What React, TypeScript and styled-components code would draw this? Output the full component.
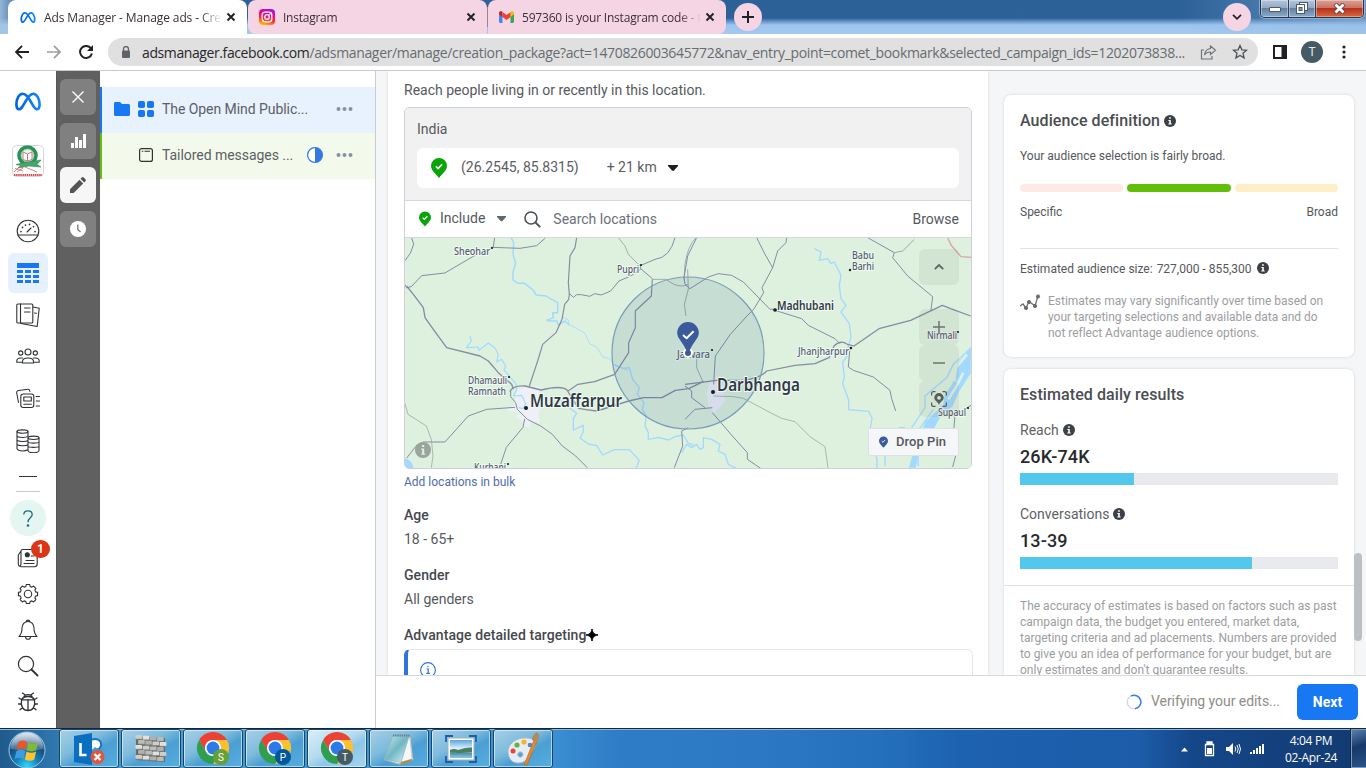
import React from 'react';
import styled, { createGlobalStyle } from 'styled-components';

const Global = createGlobalStyle`
  * { box-sizing: border-box; }
  body { margin: 0; font-family: Roboto, "Liberation Sans", sans-serif; font-size: 14px; color: #54565a; overflow: hidden; }
  svg { display: block; flex: none; }
`;

const Screen = styled.div`
  width: 1366px; height: 768px; display: flex; flex-direction: column; overflow: hidden; background: #fff;
`;

/* ---------- browser ---------- */
const TabStrip = styled.div`
  height: 34px; flex: none; display: flex; align-items: flex-start; padding-left: 8px;
  font-family: "Open Sans", "Noto Sans", sans-serif; font-size: 12px; color: #3a3034;
  background:
    linear-gradient(90deg, rgba(165,196,224,.85) 0, rgba(165,196,224,.4) 12px, transparent 30px, transparent 1180px, rgba(150,190,225,.55) 1366px),
    linear-gradient(180deg, #2c6198 0, #2d6097 18px, #5d8fc4 21px, #9dc4ee 25px, #a3c9f0 34px);
`;
const Tab = styled.div<{ $active?: boolean; $w: number; $first?: boolean; $last?: boolean }>`
  width: ${p => p.$w}px; height: 34px; display: flex; align-items: center;
  padding: 0 11px 0 ${p => (p.$active ? 12 : 11)}px;
  background: ${p => (p.$active ? '#fff' : '#f5d5e4')};
  border-radius: ${p => (p.$active ? '8px 8px 0 0' : p.$first ? '8px 8px 0 8px' : '8px 8px 8px 0')};
`;
const TabTitle = styled.span<{ $space: number }>`
  flex: 1; margin: 0 4px 0 8px; overflow: hidden; white-space: nowrap; letter-spacing: ${p => p.$space}px;
  mask-image: linear-gradient(90deg, #000 calc(100% - 22px), transparent);
`;
const TabDivider = styled.i`width: 1px; height: 20px; margin-top: 7px; background: #9a8790;`;
const RoundButton = styled.div`
  width: 28px; height: 28px; border-radius: 50%; background: #f5d5e4; display: grid; place-items: center; margin-top: 3px;
`;
const Grow = styled.div`flex: 1;`;
const WindowControls = styled.div`
  display: flex; width: 104px; height: 18px; margin: 0 2px 0 9px; overflow: hidden;
  border: 1px solid #24364d; border-top: 0; border-radius: 0 0 5px 5px; box-shadow: 0 0 1px 1px #c4daef88;
`;
const WindowButton = styled.div<{ $w: number; $close?: boolean }>`
  width: ${p => p.$w}px; display: grid; place-items: center; padding-bottom: 1px; border-right: 1px solid #2c4059;
  box-shadow: inset 0 0 0 1px rgba(255,255,255,.35);
  background: ${p => p.$close
    ? 'linear-gradient(#dca095, #c87464 45%, #b8311c 50%, #d8673f)'
    : 'linear-gradient(#b4c6da, #93a9c4 45%, #66809f 50%, #8eabca)'};
  &:last-child { border-right: 0; }
`;
const Toolbar = styled.div`
  height: 37px; flex: none; display: flex; align-items: center; padding: 0 12px; background: #fff; border-bottom: 1px solid #c8c9cb;
`;
const NavIcon = styled.div`width: 20px; height: 20px; margin-right: 12px; display: grid; place-items: center;`;
const Omnibox = styled.div`
  width: 1150px; height: 28px; border-radius: 14px; background: #e0e0e0; display: flex; align-items: center; gap: 0;
  padding: 0 10px 0 12px; font-family: "Open Sans", "Noto Sans", sans-serif; font-size: 14px; color: #686c70;
`;
const Url = styled.span`
  margin-left: 10px; width: 1043px; white-space: nowrap; letter-spacing: -0.345px; margin-right: 15px;
  b { font-weight: 400; color: #26282b; letter-spacing: -0.4px; }
`;
const ProfileDot = styled.div`
  width: 22px; height: 22px; border-radius: 50%; background: #455a64; color: #e6eaec; font-size: 12px; display: grid; place-items: center;
`;

/* ---------- application ---------- */
const Body = styled.div`height: 657px; flex: none; display: flex;`;
const Sidebar = styled.nav`
  width: 56px; display: flex; flex-direction: column; align-items: center; padding-top: 12px; background: #fff;
`;
const SideSlot = styled.div<{ $h: number; $mt?: number }>`
  height: ${p => p.$h}px; width: 56px; margin-top: ${p => p.$mt || 0}px; flex: none; display: grid; place-items: center;
  position: relative; color: #2f3235;
`;
const ActiveTile = styled.div`
  width: 40px; height: 40px; border-radius: 6px; background: #e7f1fd; display: grid; place-items: center;
`;
const SideLine = styled.i<{ $w: number; $mt: number; $color: string }>`
  width: ${p => p.$w}px; height: 1px; margin-top: ${p => p.$mt}px; background: ${p => p.$color}; flex: none;
`;
const HelpCircle = styled.div`
  width: 36px; height: 36px; border-radius: 50%; background: #e5f5f1; display: grid; place-items: center;
`;
const Badge = styled.span`
  position: absolute; left: 31px; top: 0; width: 19px; height: 18px; border-radius: 9px; background: #dc3516; color: #fff;
  font-size: 12px; font-weight: 700; line-height: 18px; text-align: center;
`;
const Rail = styled.div`
  width: 44px; background: #606060; border-left: 1px solid #555; padding: 8px 4px 0 3px; display: flex; flex-direction: column; gap: 8px;
`;
const RailButton = styled.div<{ $on?: boolean }>`
  width: 36px; height: 36px; border-radius: 6px; display: grid; place-items: center; background: ${p => (p.$on ? '#f6f6f6' : '#808080')};
`;
const Tree = styled.div`
  width: 276px; padding-top: 16px; background: #fff; border-right: 1px solid #c9ccd1;
`;
const TreeRow = styled.div<{ $accent: string; $bg: string; $pl: number }>`
  height: 46px; display: flex; align-items: center; background: ${p => p.$bg}; border-left: 2px solid ${p => p.$accent};
  padding: 0 21px 2px ${p => p.$pl}px;
`;
const TreeName = styled.span<{ $w: number; $s: number }>`
  margin-left: 8px; width: ${p => p.$w}px; white-space: nowrap; letter-spacing: ${p => p.$s}px; color: #5c6066;
`;
const Workspace = styled.div`width: 990px; display: flex; flex-direction: column; background: #f5f6f7;`;
const Scroll = styled.div`height: 604px; display: flex; overflow: hidden; padding-left: 12px;`;
const Editor = styled.div`
  width: 600px; height: 604px; background: #fff; padding: 11px 16px 0; box-shadow: 0 0 2px rgba(0,0,0,.16); overflow: hidden;
`;
const Line = styled.div<{ $mt?: number; $medium?: boolean; $s?: number }>`
  height: 16px; line-height: 16px; margin-top: ${p => p.$mt || 0}px; font-weight: ${p => (p.$medium ? 500 : 400)};
  color: ${p => (p.$medium ? '#45484c' : '#56595d')}; letter-spacing: ${p => (p.$medium ? .07 : p.$s || 0)}px;
  white-space: nowrap; display: flex; align-items: center;
`;
const LocationBox = styled.div`
  width: 568px; height: 362px; margin-top: 9px; border: 1px solid #ccd0dc; border-radius: 5px; overflow: hidden;
`;
const Selected = styled.div`height: 93px; background: #f1f1f1; border-bottom: 1px solid #d5d8df; padding: 13px 12px 0;`;
const Chosen = styled.div`
  height: 40px; margin-top: 11px; background: #fff; border-radius: 6px; display: flex; align-items: center; padding: 0 14px 1px;
  color: #5a5d62;
`;
const ChosenText = styled.span<{ $ml: number; $s?: number }>`
  margin-left: ${p => p.$ml}px; padding-bottom: 2px; letter-spacing: ${p => p.$s || 0}px;
`;
const SearchRow = styled.div`
  height: 37px; display: flex; align-items: center; padding: 0 12px 0 14px; border-bottom: 1px solid #d5d8df; color: #54585e;
`;
const Hint = styled.span`margin-left: 12px; color: #6b7079; flex: 1;`;
const MapArea = styled.div`position: relative; width: 566px; height: 230px; background: #def1df;`;
const MapControl = styled.div<{ $y: number }>`
  position: absolute; left: 514px; top: ${p => p.$y}px; width: 40px; height: 36px; border-radius: 6px; background: rgba(90,100,90,.09);
  display: grid; place-items: center;
`;
const DropPin = styled.div`
  position: absolute; left: 463px; top: 190px; width: 91px; height: 28px; background: #f5f6f7; border: 1px solid #dfe1e6; border-radius: 2px;
  display: flex; align-items: center; gap: 8px; padding: 0 0 1px 10px; font-weight: 500; font-size: 13px; color: #55595f; white-space: nowrap; letter-spacing: .05px;
`;
const BulkLink = styled.a`display: block; margin-top: 6px; height: 14px; line-height: 14px; font-size: 12px; color: #4f6dab;`;
const Notice = styled.div`
  width: 569px; height: 60px; margin-top: 6px; border: 1px solid #e4e6ea; border-left: 4px solid #2f73dd; border-radius: 6px; padding: 12px;
`;
const Insights = styled.aside`width: 350px; margin-left: 16px; padding-top: 24px;`;
const Card = styled.section<{ $h: number; $mt?: number }>`
  height: ${p => p.$h}px; margin-top: ${p => p.$mt || 0}px; background: #fff; border-radius: 7px; box-shadow: 0 0 3px rgba(0,0,0,.14);
  padding: 16px 16px 0; overflow: hidden;
`;
const CardTitle = styled.div`
  height: 20px; font-size: 16px; line-height: 20px; font-weight: 500; color: #4b4d50; display: flex; align-items: center; gap: 4px;
  white-space: nowrap; letter-spacing: .08px;
`;
const Small = styled.div<{ $mt: number; $s?: number }>`
  font-size: 12px; height: 16px; line-height: 16px; margin-top: ${p => p.$mt}px; display: flex; align-items: center; color: #55575a;
  letter-spacing: ${p => p.$s || 0}px; white-space: nowrap;
`;
const Gauge = styled.div`display: grid; grid-template-columns: 103px 104px 103px; gap: 4px; margin-top: 20px;`;
const GaugePart = styled.i<{ $c: string }>`height: 8px; border-radius: 4px; background: ${p => p.$c};`;
const Divider = styled.hr<{ $m: string }>`border: 0; height: 1px; background: #e0e2e5; margin: ${p => p.$m};`;
const Fine = styled.div<{ $s: number }>`font-size: 12px; line-height: 16px; color: #9c9d9f; letter-spacing: ${p => p.$s}px; white-space: nowrap;`;
const EstimateRow = styled.div`display: flex; gap: 6px; margin-top: 16px;`;
const Metric = styled.div<{ $mt: number }>`margin-top: ${p => p.$mt}px;`;
const MetricName = styled.div`height: 16px; line-height: 16px; display: flex; align-items: center; gap: 4px; color: #606266;`;
const MetricValue = styled.div`height: 24px; line-height: 24px; margin-top: 7px; font-size: 18px; font-weight: 500; color: #27292c; letter-spacing: .1px;`;
const Meter = styled.div`height: 12px; margin-top: 4px; background: #e9eaee;`;
const MeterFill = styled.div`height: 12px; background: #54c7ec;`;
const Gutter = styled.div`width: 12px; padding-top: 482px;`;
const Thumb = styled.div`width: 8px; height: 88px; border-radius: 4px; background: #bcc0c5;`;
const Footer = styled.footer`
  height: 53px; border-top: 1px solid #d6d8db; background: #fff; display: flex; align-items: center; justify-content: flex-end; padding-right: 8px;
`;
const Status = styled.span`margin: 0 17px 0 9px; padding-bottom: 2px; color: #8f8c86; letter-spacing: -.05px;`;
const NextButton = styled.button`
  width: 61px; height: 36px; border: 0; border-radius: 6px; background: #1877f2; color: #fff; font: 700 14px Roboto, sans-serif; padding: 0 0 1px;
`;

/* ---------- taskbar ---------- */
const Taskbar = styled.div`
  height: 40px; flex: none; display: flex; align-items: flex-start; border-top: 1px solid #13283f; box-shadow: inset 0 1px 0 #8fb9dc;
  background:
    linear-gradient(36deg, transparent 885px, rgba(90,160,220,.0) 700px, transparent 100%),
    linear-gradient(90deg, #1f5a8c 0, #2f78ae 56px, #4d9fd2 130px, #3f94d0 420px, #3d92d4 540px, #2f7cc6 620px, #2c78c4 760px, #2470bd 880px, #1d62b0 960px, #1c5ca8 1140px, #15478a 1190px, #123a70 1366px);
`;
const Orb = styled.div`width: 59px; height: 39px; padding: 2px 0 0 8px;`;
const TaskButton = styled.div<{ $tint: string }>`
  width: 60px; height: 39px; margin-right: 2px; border: 1px solid #17466d; border-radius: 3px; display: grid; place-items: center;
  box-shadow: inset 0 0 0 1px rgba(255,255,255,.55); background: ${p => p.$tint};
`;
const Tray = styled.div`display: flex; align-items: center; height: 39px; margin-right: 19px;`;
const Clock = styled.div`
  width: 66px; text-align: center; font-family: "Open Sans", "Noto Sans", sans-serif; font-size: 12px; line-height: 17px; color: #fff; letter-spacing: -.35px;
`;
const ShowDesktop = styled.div`
  width: 15px; height: 39px; border: 1px solid #7d9cc2; border-right: 0; box-shadow: -1px 0 0 #0d2547; background: linear-gradient(160deg, #5a7faa, #17396a 45%, #2c5288);
`;

/* ---------- drawings ---------- */
const Meta = ({ w, h, sw = 2.8 }: { w: number; h: number; sw?: number }) => (
  <svg width={w} height={h} viewBox="0 0 28 20" fill="none">
    <defs><linearGradient id="meta" x1="0" x2="1"><stop offset="0" stopColor="#0064e0" /><stop offset="1" stopColor="#0f86ff" /></linearGradient></defs>
    <path d="M1.8 13C1.8 7 4.7 1.8 8.3 1.8c3.7 0 5.9 3.2 9.7 10.2 2.2 4 3.5 6.2 5.4 6.2s2.8-2 2.8-5.2C26.2 7 23 1.8 19.5 1.8c-3.1 0-5.5 3.7-8 7.9C8 15.8 6.900 18.200 4.600 18.200c-2 0-2.800-2-2.800-5.200Z" stroke="url(#meta)" strokeWidth={sw} />
  </svg>
);
const Cross = ({ color = '#202124' }: { color?: string }) => (
  <svg width="10" height="10" viewBox="0 0 10 10"><path d="M1.500 1.500l7 7M8.500 1.500l-7 7" stroke={color} strokeWidth="1.900" /></svg>
);
const Instagram = () => (
  <svg width="16" height="16" viewBox="0 0 16 16" fill="none">
    <defs><linearGradient id="ig" x1=".35" y1="1" x2=".65" y2="0">
      <stop offset="0" stopColor="#ffb800" /><stop offset=".35" stopColor="#ff2d3c" /><stop offset=".65" stopColor="#f5067e" /><stop offset="1" stopColor="#9a14f0" />
    </linearGradient></defs>
    <rect width="16" height="16" rx="4" fill="url(#ig)" />
    <rect x="3.200" y="3.200" width="9.600" height="9.600" rx="2.800" stroke="#fff" strokeWidth="1.300" />
    <circle cx="8" cy="8" r="2.300" stroke="#fff" strokeWidth="1.300" /><circle cx="10.900" cy="5.100" r=".8" fill="#fff" />
  </svg>
);
const Gmail = () => (
  <svg width="15" height="12" viewBox="0 0 15 12">
    <path d="M0 2v8.500C0 11.300.7 12 1.300 12H3.500V5Z" fill="#4285f4" /><path d="M15 2v8.500c0 .8-.7 1.500-1.300 1.500h-2.200V5Z" fill="#34a853" />
    <path d="M0 3.200V2C0 .2 1.800-.3 3 .6l.5.400V6Z" fill="#c5221f" /><path d="M15 3.200V2c0-1.800-1.800-2.300-3-1.400l-.5.400V6Z" fill="#fbbc04" />
    <path d="M3.500 1l4 3 4-3v5l-4 3-4-3Z" fill="#ea4335" />
  </svg>
);
const Info = ({ size = 12, color = '#3c3f43' }: { size?: number; color?: string }) => (
  <svg width={size} height={size} viewBox="0 0 12 12"><circle cx="6" cy="6" r="6" fill={color} />
    <path d="M5.100 2.300h1.700v1.500H5.100zM4.300 4.900h2.500v3.500h.9v1H4.300v-1h.9V5.900h-.9z" fill="#fff" /></svg>
);
const Pin = ({ w, h, color = '#0aa40a' }: { w: number; h: number; color?: string }) => (
  <svg width={w} height={h} viewBox="0 0 16 20"><path d="M8 0a8 8 0 0 1 8 8c0 4.300-4.200 7.300-8 12C4.200 15.300 0 12.300 0 8a8 8 0 0 1 8-8Z" fill={color} />
    <path d="M4.900 8.400l2.200 2.100 4-4.200" fill="none" stroke="#fff" strokeWidth="1.600" /></svg>
);
const Caret = ({ w = 10, color = '#1c1e21' }: { w?: number; color?: string }) => (
  <svg width={w} height={w * .6} viewBox="0 0 10 6"><path d="M0 0h10v1L6 5.600Q5 6.300 4 5.600L0 1Z" fill={color} /></svg>
);
const Dots = () => (
  <svg width="17" height="4" viewBox="0 0 17 4" fill="#8b90a0"><circle cx="2.500" cy="2" r="2" /><circle cx="8.500" cy="2" r="2" /><circle cx="14.500" cy="2" r="2" /></svg>
);
const Stroke = ({ size = 24, w = 1.100, children }: { size?: number; w?: number; children: React.ReactNode }) => (
  <svg width={size} height={size} viewBox="0 0 24 24" fill="none" stroke="currentColor" strokeWidth={w} strokeLinecap="round" strokeLinejoin="round">{children}</svg>
);
const School = () => (
  <svg width="32" height="32" viewBox="0 0 32 32" fill="none">
    <rect x=".5" y=".5" width="31" height="31" rx="4" fill="#fff" stroke="#d4d6d8" />
    <circle cx="15.500" cy="10.500" r="8.500" fill="#eef2ee" stroke="#2b9157" strokeWidth="3.600" />
    <circle cx="15.500" cy="10.500" r="6.400" stroke="#7fbf95" strokeWidth=".8" />
    <path d="M11 7l4.500 2L20 7v7.500l-4.500 1.500-4.500-1.500Z" fill="#fff" stroke="#bf7c80" />
    <path d="M15.500 9v7" stroke="#bf7c80" />
    <path d="M4 19.500l9-2 16-2.500-4 4.500 4 2.500-12-1-11 2 3-2.500Z" fill="#43a86d" stroke="#278a50" strokeWidth=".6" />
    <path d="M2 27l5-5 4 1-6 4M3 23.500l8 2.500M13 22l12 5" stroke="#d4666b" strokeWidth=".8" />
    <path d="M2 30h28" stroke="#d94a50" strokeWidth="2" strokeDasharray="1.500 .6" />
  </svg>
);
const gearPath = () => {
  const n = 8, pts: string[] = [];
  for (let i = 0; i < n; i++) {
    const a = (i * 2 * Math.PI) / n - Math.PI / 2;
    [[-.27, 7.900], [-.17, 9.700], [.17, 9.700], [.27, 7.900]].forEach(([d, r]) => pts.push(`${(12 + r * Math.cos(a + d)).toFixed(2)} ${(12 + r * Math.sin(a + d)).toFixed(2)}`));
  }
  return 'M' + pts.join('L') + 'Z';
};
const Chrome = ({ letter, color }: { letter: string; color: string }) => (
  <svg width="34" height="34" viewBox="0 0 34 34">
    <g transform="translate(1 0) scale(.667)">
      <path d="M24 12H44.800A24 24 0 0 0 3.200 12L13.600 30A12 12 0 0 1 24 12" fill="#ea4335" />
      <path d="M44.800 12H24A12 12 0 0 1 34.400 30L24 48A24 24 0 0 0 44.800 12" fill="#fbc02d" />
      <path d="M3.200 12A24 24 0 0 0 24 48L34.400 30A12 12 0 0 1 13.600 30Z" fill="#2f9e4f" />
      <circle cx="24" cy="24" r="12" fill="#fff" /><circle cx="24" cy="24" r="9.600" fill="#2a7be8" />
    </g>
    <circle cx="25" cy="25" r="8" fill={color} />
    <text x="25" y="28.700" fontSize="10" fontFamily="Roboto, sans-serif" fill="#fff" textAnchor="middle">{letter}</text>
  </svg>
);
const StartOrb = () => (
  <svg width="38" height="38" viewBox="0 0 38 38">
    <defs>
      <radialGradient id="orb" cx=".5" cy=".95" r=".9"><stop offset="0" stopColor="#35d8ff" /><stop offset=".35" stopColor="#1583bd" /><stop offset=".7" stopColor="#164a7d" /><stop offset="1" stopColor="#6f96b4" /></radialGradient>
      <linearGradient id="shine" x2="0" y2="1"><stop offset="0" stopColor="#fff" stopOpacity=".75" /><stop offset="1" stopColor="#fff" stopOpacity=".15" /></linearGradient>
    </defs>
    <circle cx="19" cy="19" r="18" fill="url(#orb)" stroke="#9cc7e4" />
    <path d="M2.500 18a16.500 16.500 0 0 1 33 0q-16 3-33 0Z" fill="url(#shine)" />
    <g transform="translate(-1.500 -2) scale(1.120)">
      <path d="M10.500 11.500q4-2.500 8 0l-1.500 7q-4-2-8 0Z" fill="#e5582a" /><path d="M19.500 12q4 2.200 8.500 0l-1.500 7q-4 2-8.500 0Z" fill="#7fba2f" />
      <path d="M8.800 19.800q4-2.400 8 0l-1.500 7q-4-2.400-8 0Z" fill="#3d9de0" /><path d="M17.900 20.200q4 2.200 8.500 0l-1.500 7q-4 2.200-8.500 0Z" fill="#fcc52c" />
    </g>
  </svg>
);
const LyncIcon = () => (
  <svg width="34" height="36" viewBox="0 0 34 36">
    <path d="M19 9c6-3 11 1 10 6l-2 3-8 2" fill="#fff" stroke="#1676c4" strokeWidth="2" /><path d="M18 21l5-5 8 5-6 7h-7Z" fill="#3f98d8" />
    <path d="M2 5L20 2v32L2 31Z" fill="#0a6fc0" /><path d="M8.500 12v12h6" fill="none" stroke="#fff" strokeWidth="2.600" />
    <circle cx="25.500" cy="26" r="7" fill="#e2553a" /><path d="M22.500 23l6 6M28.500 23l-6 6" stroke="#fff" strokeWidth="2.200" />
  </svg>
);
const WallIcon = () => {
  const bricks: React.ReactNode[] = [];
  for (let r = 0; r < 5; r++) for (let c = 0; c < 4; c++) {
    const x = c * 7.200 + (r % 2 ? 2.600 : 0) + .5;
    bricks.push(
      <g key={`${r}${c}`}>
        <rect x={x} y={r * 5 + c * .7 + 1} width="6.600" height="4.600" rx=".8" fill={['#cfcfca', '#b0b1b0', '#e2e2dd', '#bdbdb7'][(r * 3 + c * 2 + (c > 1 ? 1 : 0)) % 4]} />
        <path d={`M${x} ${r * 5 + c * .7 + 5.300}h6.600`} stroke="#6f7274" strokeWidth=".9" />
      </g>,
    );
  }
  return <svg width="32" height="30" viewBox="0 0 32 30"><path d="M1 2l29 2v24L1 26Z" fill="#686b6c" />{bricks}</svg>;
};
const NotepadIcon = () => (
  <svg width="34" height="34" viewBox="0 0 34 34"><defs><linearGradient id="np" x2="1" y2="1"><stop offset="0" stopColor="#cfeaf0" /><stop offset=".5" stopColor="#6fb7c4" /><stop offset="1" stopColor="#e8f6f8" /></linearGradient></defs>
    <path d="M11 4l17 1 3 23-14 4-14-4Z" fill="#f6f8f8" stroke="#aab6b8" /><path d="M11 3.500l16 1-8 26L2 27.500Z" fill="url(#np)" stroke="#8db4bc" strokeWidth=".7" />
    <path d="M20 30l10-3-2-21" fill="none" stroke="#c8ced0" /><path d="M11 3.500h17" stroke="#69767a" strokeWidth="2" strokeDasharray="1.200 1" /><path d="M19 30l11-3v2l-11 4Z" fill="#b48a4a" /></svg>
);
const PictureIcon = () => (
  <svg width="32" height="28" viewBox="0 0 32 28"><defs><linearGradient id="pic" x1="0" y1="0" x2="0" y2="1"><stop offset="0" stopColor="#5aa5e2" /><stop offset=".5" stopColor="#e6f3fa" /><stop offset=".6" stopColor="#bfe0ea" /><stop offset=".75" stopColor="#4f93b3" /><stop offset="1" stopColor="#8fcbe0" /></linearGradient></defs>
    <rect x="3" y="3" width="26" height="22" fill="#fff" stroke="#9bb0c0" /><rect x="5" y="5" width="22" height="18" fill="url(#pic)" />
    <path d="M5 15q4-2 8 0 7-3 14-2.500v4.500l-12 1-10-.5Z" fill="#4a7f5f" />
    <path d="M1 7V1h7M24 1h7v6M31 21v6h-7M8 27H1v-6" fill="none" stroke="#1e5da8" strokeWidth="1.800" /></svg>
);
const PaletteIcon = () => (
  <svg width="34" height="34" viewBox="0 0 34 34"><path d="M2 21C1 12 11 5 20 6c9 0 11 5 8 11-2 4-4 3-5 6-1 5-5 8-11 8S3 27 2 21Zm13-1a2.600 2.600 0 1 0 .1 5 2.600 2.600 0 0 0-.1-5Z" fill="#e6ecf3" stroke="#a9b8c9" />
    <circle cx="7" cy="19" r="2.500" fill="#e34632" /><circle cx="11" cy="13" r="2.600" fill="#64b63c" /><circle cx="18" cy="10" r="2.600" fill="#f2b52b" /><circle cx="24" cy="13" r="2.300" fill="#4a8bd8" />
    <path d="M28 8l3 1-10 24-3 0Z" fill="#e28a30" stroke="#b5651c" strokeWidth=".6" /><path d="M26 8c0-4 3-7 5-8 3 3 3 6 0 10Z" fill="#b08a62" /></svg>
);

const Label = ({ x, y, w, size = 10.200, bold, children }: { x: number; y: number; w: number; size?: number; bold?: boolean; children: string }) => (
  <text x={x} y={y} textLength={w} lengthAdjust="spacingAndGlyphs" fontFamily='"Noto Sans", sans-serif' fontSize={size} fontWeight={bold ? 600 : 500}
    fill={bold ? '#2f3a46' : '#535d70'} stroke="#f3faf3" strokeWidth="2" paintOrder="stroke" strokeLinejoin="round">{children}</text>
);

const LocationMap = () => (
  <svg width="566" height="230" viewBox="405 238 566 230" fill="none" strokeLinejoin="round">
    <g transform="translate(400 236) scale(.33333)">
      <path d="M348 462l30-10 40 0 5 50-8 35 5 25-27-5-5 18-20-5 0-15-20-10 12-15-35-5-5-5 25-15Z" fill="#eef0f7" />
      <g stroke="#a3d9ff" strokeWidth="3.500">
        <path d="M333 5l8 14-2 35 8 28-8 25 0 25 15 10 20 0 25 20 10 15 30 3 12 8 22 12 0 30-15 0 2 15-20 8 10 2 20 0 5 12 20-12 12 12" strokeWidth="4.500" />
        <path d="M486 243l18 8 5 15 45 25 15 32 20 10 20 30 20 5 15 20 40 15" strokeWidth="2.500" />
        <path d="M210 300l4 15-15 20 35-2 3 10 28-22 20 15 10 20-5 22 15-8 12 20-5 12 35 40 3 20-10 18 25-2 12 25-8 15-12-3" />
        <path d="M455 480l30 15 25 22 20 15-10 15 0 35 30-14 0 20-10 18 25 18 25 5 18 28 35-16 45 0 30 32-10 25" strokeWidth="4" />
        <path d="M640 385l30 12 18-2 10 35 20 25-6 20 20 25-5 20 12 20-4 30 10 20 0 20 30-6 30 8 20-10 25-5 15 25 15 5" strokeWidth="4" />
        <path d="M14 668q20 5 25 28H14Z" fill="#a3d9ff" />
      </g>
      <g stroke="#858ca2" strokeWidth="3">
        <path d="M35 5l6 20-10 27-17 23" /><path d="M284 5l-4 28-60 28-60 35-25 15-70 8-30 32-15 5-5-10" />
        <path d="M275 34l85 3 50-8 25-22" /><path d="M20 150l20 25 30 40 5 30 25 35 40 55 100 25 25 15 30 35 40 35 5 15" strokeWidth="4" />
        <path d="M530 5l-5 30-15 25-5 80 3 35-2 15-12 15-8 45-18 40-40 35-15 50-25 75" strokeWidth="3.500" />
        <path d="M508 172l12 12 10-8 14 0 25 5 15-8 20 4 28-12 25-30 35-15 30-20" /><path d="M825 5q-15 60-60 65l-42 18-3 8 37 32" />
        <path d="M757 130l-3 50-48 45 0 50-20 45 0 30-42 65-60 22-50 8-30 20" strokeWidth="3.500" />
        <path d="M757 130h40l25 15q25 10 42 0" stroke="#8da09f" strokeWidth="2.500" /><path d="M655 5l20 25 10 25 30 30 8 5" stroke="#94a39e" strokeWidth="2.500" />
        <path d="M888 5q-25 25-33 80l-3 45" stroke="#94a0a5" strokeWidth="2.500" />
        <path d="M330 468q5-20 45-18l48 12q60-15 78 0 15 25 35 55 25 5 55 8l95-30 45-10 55 0 40-22 40-5 45-22" strokeWidth="4" />
        <path d="M332 467l0 15 15 18 5 20 30 30 40 20 35 25 30 35 40 30 35 35" />
        <path d="M345 514l-85 6-55 20-70 78-65 0-20 10-30 38" /><path d="M374 549l-5 25-50 60-20 60" /><path d="M865 575l-20 10 3 45-25 65" />
        <path d="M14 500l10 35 55 35 15 40 5 50-5 35" stroke="#a1aaa5" strokeWidth="2.500" />
      </g>
    </g>
    <g transform="translate(685 236) scale(.33333)">
      <path d="M73 445l25-25 12 15 10 60-30 35-20-20-5-40Z" fill="#eef0f7" />
      <g stroke="#a3d9ff" strokeWidth="4">
        <path d="M388 38l20 10-5 25 25-5 10 15 10-5 20 40-5 30 5 40 15 20-15 20 25 35 5 40-10 35-10 5 10 15-15 20 5 45-5 20 18 50 0 28 60 5 10 20-5 30 15 30-5 30 10 35 0 50-20 20 0 50" />
        <path d="M-10 650l15-25 15 10 15-10 10 15 10-5 0-30 25 5 25 15-5 20 20 10 10 30 30 15" />
        <path d="M680 575l40-60 0-35 65-55 20-40 53-50M700 690l-5-100 50-70" /><path d="M600 690v-40M640 575h20" />
      </g>
      <path d="M858 335l-38 42-15 60-30 30-10 50-45 40-10 30h32l30-55 30-20 20-45 35-55ZM672 695l10-37 20-2-10 39Z" fill="#a3d9ff" />
      <path d="M846 355l-33 40-6 40M800 440l-25 35-5 35M835 410l-20 40-25 40" stroke="#def1df" strokeWidth="8" />
      <g stroke="#858ca2" strokeWidth="3">
        <path d="M35 5L8 60-3 125 0 145" /><path d="M215 5l25 50 23 40 15-50 25-25 2-15M263 95l-32 60 5 15-30 50-20 20-50 55-45 65-5 85" />
        <path d="M0 145l15 13 55-35 30-10 40 5 35 20 80 82h25" /><path d="M270 223l80 25 20 20 80 40 15 15" />
        <path d="M0 445l95-12 85 0q50-10 65-28l85-17 60-5 42-18 15-35q20-20 40-5l20 5 75-52 95-25 95-45 25 10 60 22" strokeWidth="3.800" />
        <path d="M495 333l-5 60 15 10 60 20 50 40 5 25 12 37" /><path d="M548 5l80 45-5 15 45 55 75 62-5 40" />
        <path d="M628 50l25-5 35-35" stroke="#9eaaa5" />
        <path d="M82 530l60 70 45 50 0 20 40 27" /><path d="M0 550l30-30 52-5M0 450l20 15 0 20 40 30" />
        <path d="M858 508l-48 30-5 60 10 50-12 45" />
        <path d="M85 480l60 2 30 5 85 45 30 15 40 10 45 45 45 30 10 70" stroke="#a1aaa5" strokeWidth="2.500" /><path d="M35 365l0 30 20 45M8 100l2 60-12 45 5 35" stroke="#8da09f" strokeWidth="2.500" />
      </g>
      <path d="M788 5l10 22 30 35 30 2" stroke="#d8a5a0" strokeWidth="4" />
    </g>
    <Label x={454} y={255} w={36}>Sheohar</Label><Label x={617} y={273} w={22}>Pupri</Label>
    <Label x={468} y={384} w={39}>Dhamauli</Label><Label x={468} y={394.5} w={38}>Ramnath</Label><Label x={474} y={471} w={32}>Kurhani</Label>
    <Label x={677} y={358} w={33}>Jaiwara</Label><Label x={852} y={259} w={22}>Babu</Label><Label x={852} y={269.500} w={22}>Barhi</Label>
    <Label x={798} y={355} w={51}>Jhanjharpur</Label><Label x={927} y={339} w={30}>Nirmali</Label><Label x={938} y={416} w={28}>Supaul</Label>
    <Label x={777} y={310} w={57} size={12} bold>Madhubani</Label>
    <circle cx="688" cy="353" r="76" fill="#2a5c8c" fillOpacity=".13" stroke="#7b9cb5" strokeWidth="1.200" />
    <Label x={530} y={406.500} w={92} size={17} bold>Muzaffarpur</Label><Label x={717} y={391} w={83} size={17} bold>Darbhanga</Label>
    <g fill="#171c22">
      {[[492, 248, 1.100], [641, 265, 1.100], [509, 377, 1.100], [526, 408, 2], [713, 392, 2], [775, 310, 1.800], [850, 270, 1.200], [851, 348, 1.200], [712, 350, 1.100], [958, 332, 1.100], [508, 464, 1.100], [968, 408, 1.100]].map(([x, y, r]) => <circle key={x} cx={x} cy={y} r={r} />)}
    </g>
    <circle cx="688" cy="353" r="5" fill="#fff" /><circle cx="688" cy="353" r="3" fill="#3a5a9b" />
    <path d="M688 322a10.800 10.800 0 0 1 10.800 10.800c0 6-6 9.500-9.300 18.200h-3c-3.300-8.700-9.300-12.200-9.300-18.200A10.800 10.800 0 0 1 688 322Z" fill="#3a5a9b" />
    <path d="M683 335l3.600 3.200 7-7" stroke="#fff" strokeWidth="2" />
    <circle cx="423" cy="450" r="8" fill="#9aa49b" /><path d="M422 445h2.200v2H422zM421.200 448.500h3v5h1v1.300h-4v-1.300h.9v-3.700h-.9z" fill="#dcefdd" />
  </svg>
);

const glass = 'linear-gradient(150deg, #a6cfe8 0, #7dbbdc 40%, #4b9fd3 60%, #58aee0 100%)';
const glassBright = 'linear-gradient(150deg, #d8eef8 0, #b4daef 45%, #8cc6e8 60%, #a5d5ee 100%)';

export default function App() {
  return (
    <Screen>
      <Global />
      <TabStrip>
        <Tab $active $w={239}><Meta w={16} h={11} sw={3.200} /><TabTitle $space={-0.12}>Ads Manager - Manage ads - Creation</TabTitle><Cross /></Tab>
        <Tab $first $w={239} style={{ marginLeft: 1 }}><Instagram /><TabTitle $space={-0.25}>Instagram</TabTitle><Cross /></Tab>
        <TabDivider />
        <Tab $last $w={238}><Gmail /><TabTitle $space={-0.2}>597360 is your Instagram code - t</TabTitle><Cross /></Tab>
        <RoundButton style={{ marginLeft: 8 }}><svg width="12" height="12" viewBox="0 0 12 12"><path d="M6 0v12M0 6h12" stroke="#202124" strokeWidth="2" /></svg></RoundButton>
        <Grow />
        <RoundButton><svg width="10" height="6" viewBox="0 0 10 6"><path d="M1 .8l4 4 4-4" fill="none" stroke="#202124" strokeWidth="1.700" /></svg></RoundButton>
        <WindowControls>
          <WindowButton $w={28}><svg style={{ marginTop: 3 }} width="12" height="5" viewBox="0 0 12 5"><rect x=".5" y=".5" width="11" height="4" rx=".5" fill="#fff" stroke="#4b5a6e" /></svg></WindowButton>
          <WindowButton $w={27}><svg width="12" height="12" viewBox="0 0 12 12" stroke="#4b5a6e"><rect x="3.500" y=".5" width="8" height="8" fill="#fff" /><rect x=".5" y="2.500" width="8" height="9" fill="#fff" /><rect x="3" y="5.500" width="3" height="3" fill="#7f98b8" /></svg></WindowButton>
          <WindowButton $w={47} $close><svg width="13" height="11" viewBox="0 0 13 11"><path d="M2 1l9 9M11 1l-9 9" stroke="#5c4146" strokeWidth="4.500" /><path d="M2.500 1.500l8 8M10.500 1.500l-8 8" stroke="#fff" strokeWidth="2.800" /></svg></WindowButton>
        </WindowControls>
      </TabStrip>
      <Toolbar>
        <NavIcon><svg width="14" height="14" viewBox="0 0 14 14" fill="none" stroke="#202124" strokeWidth="1.900"><path d="M14 7H1.500M7 .8L1 7l6 6.200" /></svg></NavIcon>
        <NavIcon><svg width="14" height="14" viewBox="0 0 14 14" fill="none" stroke="#9b9da0" strokeWidth="1.700"><path d="M0 7h12.500M7 .8L13 7l-6 6.200" /></svg></NavIcon>
        <NavIcon><svg width="14" height="14" viewBox="0 0 14 14"><path d="M11.800 3.200A6 6 0 1 0 12.900 8.500" fill="none" stroke="#202124" strokeWidth="2" /><path d="M14 0v6H8Z" fill="#202124" /></svg></NavIcon>
        <Omnibox>
          <svg width="12" height="12" viewBox="0 0 12 12"><rect x="2" y="4.500" width="8" height="7.500" rx="1" fill="#5f6368" /><path d="M3.500 5V3a2.500 2.500 0 0 1 5 0v2" fill="none" stroke="#5f6368" strokeWidth="1.300" /></svg>
          <Url><b>adsmanager.facebook.com</b>/adsmanager/manage/creation_package?act=1470826003645772&amp;nav_entry_point=comet_bookmark&amp;selected_campaign_ids=1202073838...</Url>
          <svg width="17" height="15" viewBox="0 0 17 15" fill="none" stroke="#6f7377" strokeWidth="1.200"><path d="M4 5H1.500v9H12v-3" /><path d="M10.500 1l5 4.200-5 4.200V7C8 7 5.800 7.800 4.500 10c.3-3.500 2.500-6 6-6.500Z" /></svg>
          <svg style={{ marginLeft: 15 }} width="16" height="16" viewBox="0 0 16 16"><path d="M8 1.500l1.900 4.300 4.700.4-3.600 3.100 1.100 4.600L8 11.500l-4.100 2.400L5 9.300 1.400 6.200l4.700-.4Z" fill="none" stroke="#4d5156" strokeWidth="1.300" /></svg>
        </Omnibox>
        <svg style={{ marginLeft: 15 }} width="14" height="14" viewBox="0 0 14 14"><path d="M0 0h14v14H0ZM2 2v10h6.500V2Z" fill="#202124" fillRule="evenodd" /></svg>
        <ProfileDot style={{ marginLeft: 14 }}>T</ProfileDot>
        <svg style={{ marginLeft: 19 }} width="4" height="14" viewBox="0 0 4 14" fill="#202124"><circle cx="2" cy="2" r="1.600" /><circle cx="2" cy="7" r="1.600" /><circle cx="2" cy="12" r="1.600" /></svg>
      </Toolbar>

      <Body>
        <Sidebar>
          <SideSlot $h={36}><Meta w={28} h={19} /></SideSlot>
          <SideSlot $h={32} $mt={26}><School /></SideSlot>
          <SideSlot $h={42} $mt={33}><Stroke><circle cx="12" cy="12" r="10.800" /><path d="M1.800 16h20.400M11 13l4-4" /><path d="M5 12.500v.1M6.500 8.300v.1M9.500 6v.1M13.500 5.300v.1M17.500 7.500v.1M19 12.500v.1" strokeWidth="1.700" /></Stroke></SideSlot>
          <SideSlot $h={42}><ActiveTile><svg width="22" height="20" viewBox="0 0 22 20" fill="#1877f2"><path d="M0 0h22v5H0zM0 7h6v3H0zM8 7h6v3H8zM16 7h6v3h-6zM0 12h6v3H0zM8 12h6v3H8zM16 12h6v3h-6zM0 17h6v3H0zM8 17h6v3H8zM16 17h6v3h-6z" /></svg></ActiveTile></SideSlot>
          <SideSlot $h={42}><Stroke><rect x=".8" y="1" width="16" height="19" rx="1" /><path d="M4.500 1v19M8.500 5h5.500M8.500 9h5.500M17 4l6.200 1.200-2 18.300L5 20.500M18.500 10l2 .3" /></Stroke></SideSlot>
          <SideSlot $h={42}><Stroke><circle cx="12" cy="7" r="3" /><circle cx="4.700" cy="8" r="2.100" /><circle cx="19.300" cy="8" r="2.100" /><path d="M6.500 18v-1.500c0-2.500 2-3.500 5.500-3.500s5.500 1 5.500 3.500V18ZM5.500 17.300H.8V16c0-2 1.500-3 4-3h1.700M18.500 17.300h4.700V16c0-2-1.500-3-4-3h-1.700" /></Stroke></SideSlot>
          <SideSlot $h={42}><Stroke><rect x="4.800" y="7" width="13" height="13.500" rx="2.500" /><rect x="7.800" y="10" width="7.500" height="4" /><path d="M7.800 17.300h7.500M20.200 9.500h3.300M20.200 14h3.300M20.200 19h3.300M14 4.500c-.2-1.500-.8-2.300-2-2.200l-9.500 1.200C.9 3.700.5 5 .7 6l1.800 9.500" /></Stroke></SideSlot>
          <SideSlot $h={42}><Stroke><path d="M1 2.600v17C1 21 4 22 6.500 22c2 0 4-.4 5.300-1.200M12 2.600V7M12 9v12.500c0 1.300 2.500 2.200 5.500 2.200S23 22.800 23 21.500V9M1 7c1 1.500 9 2.300 11 0M1 11c1 1.500 8.500 2.300 11 .5M1 15.200c1 1.500 8.500 2.300 11 .5M12 13c1 1.500 10 1.500 11 0M12 17.200c1 1.500 10 1.500 11 0" /><ellipse cx="6.500" cy="2.600" rx="5.500" ry="1.700" /><ellipse cx="17.500" cy="8.800" rx="5.500" ry="1.700" /></Stroke></SideSlot>
          <SideLine $w={18} $mt={14} $color="#333" /><SideLine $w={24} $mt={14} $color="#c9cacc" />
          <SideSlot $h={36} $mt={8}><HelpCircle><svg width="10" height="17" viewBox="0 0 10 17" fill="none" stroke="#1c6f80" strokeWidth="1.300"><path d="M.8 4.500C.8 2 2.500.8 5 .8s4.200 1.400 4.200 3.700C9.200 8 5 7.500 5 12.200" /><circle cx="5" cy="15.500" r=".7" /></svg></HelpCircle></SideSlot>
          <SideSlot $h={36} $mt={4}><Stroke><path d="M5 5c0-1 .8-1.500 1.500-1.500h12c1.500 0 2.700 1 2.700 2.500v12c0 1.500-1 2.700-2.700 2.700H5.500c-2 0-3.200-1.200-3.200-3V9L5 5v12.500c0 1.500-.6 2.500-1.500 2.500M10 14.500h8M8 17.500h10M15 10h3" /><circle cx="11.300" cy="8.800" r="2" fill="currentColor" /></Stroke><Badge>1</Badge></SideSlot>
          <SideSlot $h={36}><Stroke><path d={gearPath()} /><circle cx="12" cy="12" r="3.700" /></Stroke></SideSlot>
          <SideSlot $h={36}><Stroke><path d="M3 18.500c2.500-2.500 3-5 3-8.500 0-3.500 2.500-6.500 6-6.500s6 3 6 6.500c0 3.500.5 6 3 8.500ZM9.500 18.500c0 1.700 1 2.800 2.500 2.800s2.500-1.100 2.500-2.800M10.300 3.600c0-2 3.400-2 3.400 0" /></Stroke></SideSlot>
          <SideSlot $h={36}><Stroke w={1.200}><circle cx="10" cy="10" r="7.600" /><path d="M15.500 15.500l6 6" strokeWidth="1.800" /></Stroke></SideSlot>
          <SideSlot $h={36}><Stroke w={1.300}><path d="M5.500 10.500C6 8.500 8.500 6.500 12 6.500s6 2 6.500 4c1 5.500-1.500 10-6.500 10s-7.500-4.500-6.500-10ZM12 9.500v11M5.700 9.800h12.600M8 7.200c0-3.500 8-3.500 8 0M9 4.700L6.500 3M15 4.700L17.500 3M5.500 9.500L3 8M18.500 9.500L21 8M5.200 14H2.500M18.800 14h2.700M6.500 17.800L4 19.800M17.500 17.800l2.500 2" /></Stroke></SideSlot>
        </Sidebar>
        <Rail>
          <RailButton><svg width="12" height="12" viewBox="0 0 12 12"><path d="M.5.500l11 11M11.500.500l-11 11" stroke="#fff" strokeWidth="1.400" /></svg></RailButton>
          <RailButton><svg style={{ marginLeft: 1 }} width="15" height="16" viewBox="0 0 15 16" fill="#fff"><path d="M0 10h3v5H0zM4 4h3v11H4zM8 7h3v8H8zM12 1h3v14h-3z" /></svg></RailButton>
          <RailButton $on><svg width="16" height="16" viewBox="0 0 16 16" fill="#555"><path d="M0 12.300L9.500 2.800l3.700 3.700L3.700 16H0Z" /><path d="M10.500 1.800l1.200-1.200c.7-.7 1.500-.7 2.100 0l1.600 1.600c.7.7.7 1.500 0 2.100l-1.200 1.200Z" /></svg></RailButton>
          <RailButton><svg width="16" height="16" viewBox="0 0 16 16"><circle cx="8" cy="8" r="8" fill="#fff" /><path d="M7.800 3.500v5l2.700 2.500" fill="none" stroke="#777" strokeWidth="1.300" /></svg></RailButton>
        </Rail>
        <Tree>
          <TreeRow $accent="#1877f2" $bg="#e7f2fe" $pl={12}>
            <svg width="16" height="14" viewBox="0 0 16 14"><path d="M0 1.500C0 .6.600 0 1.500 0H6l2 2h6.500c.9 0 1.500.6 1.500 1.500v9c0 .9-.6 1.500-1.500 1.500h-13C.600 14 0 13.400 0 12.500Z" fill="#1877f2" /></svg>
            <svg style={{ marginLeft: 8 }} width="16" height="16" viewBox="0 0 16 16" fill="#1877f2"><rect width="7" height="7" rx="1.800" /><rect x="9" width="7" height="7" rx="1.800" /><rect y="9" width="7" height="7" rx="1.800" /><rect x="9" y="9" width="7" height="7" rx="1.800" /></svg>
            <TreeName $w={174} $s={-0.06}>The Open Mind Public...</TreeName><Dots />
          </TreeRow>
          <TreeRow $accent="#65bf0c" $bg="#f3faec" $pl={37}>
            <svg width="14" height="14" viewBox="0 0 14 14" fill="none" stroke="#333"><rect x=".6" y=".6" width="12.800" height="12.800" rx="2" strokeWidth="1.200" /><path d="M2.800 3.300h1.500M5.500 3.300h5.500" strokeWidth="1.100" /></svg>
            <TreeName $w={145} $s={-0.05} style={{ marginLeft: 9 }}>Tailored messages ...</TreeName>
            <svg width="16" height="16" viewBox="0 0 16 16"><circle cx="8" cy="8" r="7.400" fill="#fff" stroke="#3578e5" strokeWidth="1.200" /><path d="M8 .5a7.500 7.500 0 0 1 0 15Z" fill="#3578e5" /></svg>
            <span style={{ marginLeft: 13 }}><Dots /></span>
          </TreeRow>
        </Tree>
        <Workspace>
          <Scroll>
            <Editor>
              <Line>Reach people living in or recently in this location.</Line>
              <LocationBox>
                <Selected>
                  <Line>India</Line>
                  <Chosen><Pin w={16} h={20} /><ChosenText $ml={14}>(26.2545, 85.8315)</ChosenText><ChosenText $ml={28}>+ 21 km</ChosenText><span style={{ marginLeft: 11 }}><Caret w={10} /></span></Chosen>
                </Selected>
                <SearchRow>
                  <Pin w={12} h={16} /><ChosenText $ml={9}>Include</ChosenText>
                  <span style={{ marginLeft: 12, marginRight: 18 }}><Caret w={9} color="#606770" /></span>
                  <svg width="17" height="17" viewBox="0 0 17 17" fill="none" stroke="#4b4f56"><circle cx="7" cy="7" r="6" strokeWidth="1.600" /><path d="M11.500 11.500l4.700 4.700" strokeWidth="1.900" /></svg>
                  <Hint>Search locations</Hint>Browse
                </SearchRow>
                <MapArea>
                  <LocationMap />
                  <MapControl $y={11}><svg width="10" height="6" viewBox="0 0 10 6"><path d="M.8 5.200L5 1l4.200 4.200" fill="none" stroke="#5e6660" strokeWidth="1.800" /></svg></MapControl>
                  <MapControl $y={71}><svg width="12" height="12" viewBox="0 0 12 12"><path d="M6 0v12M0 6h12" stroke="#6a736c" strokeWidth="1.500" /></svg></MapControl>
                  <MapControl $y={107}><svg width="12" height="2" viewBox="0 0 12 2"><path d="M0 1h12" stroke="#6a736c" strokeWidth="1.500" /></svg></MapControl>
                  <MapControl $y={143}><svg width="16" height="16" viewBox="0 0 16 16"><path d="M.6 4.500V2.500C.6 1.200 1.200.6 2.500.6h2M11.500.6h2c1.300 0 1.900.6 1.900 1.900v2M15.400 11.500v2c0 1.300-.6 1.900-1.900 1.900h-2M4.500 15.400h-2c-1.300 0-1.900-.6-1.900-1.900v-2" fill="none" stroke="#555e5c" strokeWidth="1.200" /><path d="M8 2a4.700 4.700 0 0 1 4.700 4.700C12.700 10 9 10.500 8 14 7 10.500 3.300 10 3.300 6.700A4.700 4.700 0 0 1 8 2Zm0 2.900a1.900 1.900 0 1 0 0 3.800 1.900 1.900 0 0 0 0-3.800Z" fill="#555e5c" fillRule="evenodd" /></svg></MapControl>
                  <DropPin><Pin w={9} h={12} color="#3a5a9b" />Drop Pin</DropPin>
                </MapArea>
              </LocationBox>
              <BulkLink>Add locations in bulk</BulkLink>
              <Line $mt={18} $medium>Age</Line><Line $mt={8}>18 - 65+</Line>
              <Line $mt={20} $medium>Gender</Line><Line $mt={8}>All genders</Line>
              <Line $mt={20} $medium>Advantage detailed targeting<svg width="12" height="12" viewBox="0 0 12 12"><path d="M6 0C6.800 4 8 5.200 12 6 8 6.800 6.800 8 6 12 5.200 8 4 6.800 0 6 4 5.200 5.200 4 6 0Z" fill="#000" stroke="#000" /></svg></Line>
              <Notice><svg width="16" height="16" viewBox="0 0 16 16" fill="none" stroke="#2f73dd"><circle cx="8" cy="8" r="7.400" strokeWidth="1.100" /><path d="M6.500 7h1.700v4M6.300 11.400h3.600M7.900 4v1.300" strokeWidth="1.200" /></svg></Notice>
            </Editor>
            <Insights>
              <Card $h={262}>
                <CardTitle>Audience definition <Info /></CardTitle>
                <Small $mt={17}>Your audience selection is fairly broad.</Small>
                <Gauge><GaugePart $c="#ffe9e6" /><GaugePart $c="#63be09" /><GaugePart $c="#ffefc8" /></Gauge>
                <Small $mt={12}>Specific<Grow />Broad</Small>
                <Divider $m="28px 0 0" />
                <Small $mt={12}>Estimated audience size:<span style={{ marginLeft: 4 }}>727,000 - 855,300</span><span style={{ margin: '-3px 0 0 5px' }}><Info /></span></Small>
                <EstimateRow>
                  <svg style={{ marginTop: 1 }} width="22" height="18" viewBox="0 0 22 18" fill="#696b6e" stroke="#696b6e"><path d="M0 12l3-2 3 4 3-6.500 6 4.500 3-10" fill="none" strokeWidth="1.300" /><circle cx="6" cy="14" r="1.600" /><circle cx="9" cy="8" r="1.600" /><circle cx="15" cy="12" r="1.600" /><circle cx="18" cy="2.500" r="1.600" /></svg>
                  <Fine $s={-0.02}>Estimates may vary significantly over time based on<br />your targeting selections and available data and do<br />not reflect Advantage audience options.</Fine>
                </EstimateRow>
              </Card>
              <Card $h={400} $mt={12}>
                <CardTitle>Estimated daily results</CardTitle>
                <Metric $mt={17}><MetricName>Reach <Info color="#3c4048" /></MetricName><MetricValue>26K-74K</MetricValue><Meter><MeterFill style={{ width: 114 }} /></Meter></Metric>
                <Metric $mt={21}><MetricName>Conversations <Info color="#3c4048" /></MetricName><MetricValue>13-39</MetricValue><Meter><MeterFill style={{ width: 232 }} /></Meter></Metric>
                <Divider $m="16px -16px 12px" />
                <Fine $s={0}>The accuracy of estimates is based on factors such as past<br />campaign data, the budget you entered, market data,<br />targeting criteria and ad placements. Numbers are provided<br />to give you an idea of performance for your budget, but are<br />only estimates and don't guarantee results.</Fine>
              </Card>
            </Insights>
            <Gutter><Thumb /></Gutter>
          </Scroll>
          <Footer>
            <svg width="16" height="16" viewBox="0 0 16 16" fill="none" strokeWidth="1.500"><circle cx="8" cy="8" r="6.800" stroke="#d6dbe2" /><path d="M5 1.900A6.800 6.800 0 1 1 9 14.700" stroke="#3b82ee" /></svg>
            <Status>Verifying your edits...</Status><NextButton>Next</NextButton>
          </Footer>
        </Workspace>
      </Body>

      <Taskbar>
        <Orb><StartOrb /></Orb>
        <TaskButton $tint={glass}><LyncIcon /></TaskButton>
        <TaskButton $tint={glass}><WallIcon /></TaskButton>
        <TaskButton $tint={glass}><Chrome letter="S" color="#689f38" /></TaskButton>
        <TaskButton $tint={glass}><Chrome letter="P" color="#01579b" /></TaskButton>
        <TaskButton $tint={glassBright}><Chrome letter="T" color="#455a64" /></TaskButton>
        <TaskButton $tint={glass}><NotepadIcon /></TaskButton>
        <TaskButton $tint={glass}><PictureIcon /></TaskButton>
        <TaskButton $tint={glass}><PaletteIcon /></TaskButton>
        <Grow />
        <Tray>
          <svg width="86" height="18" viewBox="1180 740 86 18" fill="#fff">
            <path d="M1181 751.500l3.500-4 3.500 4Z" />
            <path d="M1207 743.500h5v-1.500h-5zM1205.500 744.500h8v11h-8z" fill="none" stroke="#fff" strokeWidth="1.300" /><path d="M1207 748h5v6h-5z" />
            <path d="M1226 747h3l4-4v12l-4-4h-3Z" /><path d="M1235 746.500q1.500 2.500 0 5M1237 745q2.500 4 0 8M1239 744q3 5 0 10" fill="none" stroke="#fff" />
            <path d="M1250 752h2v2h-2zM1253 750h2v4h-2zM1256 748h2v6h-2zM1259 746h2v8h-2zM1262 744h2v10h-2z" />
          </svg>
          <Clock style={{ marginLeft: 12 }}>4:04 PM<br />02-Apr-24</Clock>
        </Tray>
        <ShowDesktop style={{ marginLeft: -12 }} />
      </Taskbar>
    </Screen>
  );
}
